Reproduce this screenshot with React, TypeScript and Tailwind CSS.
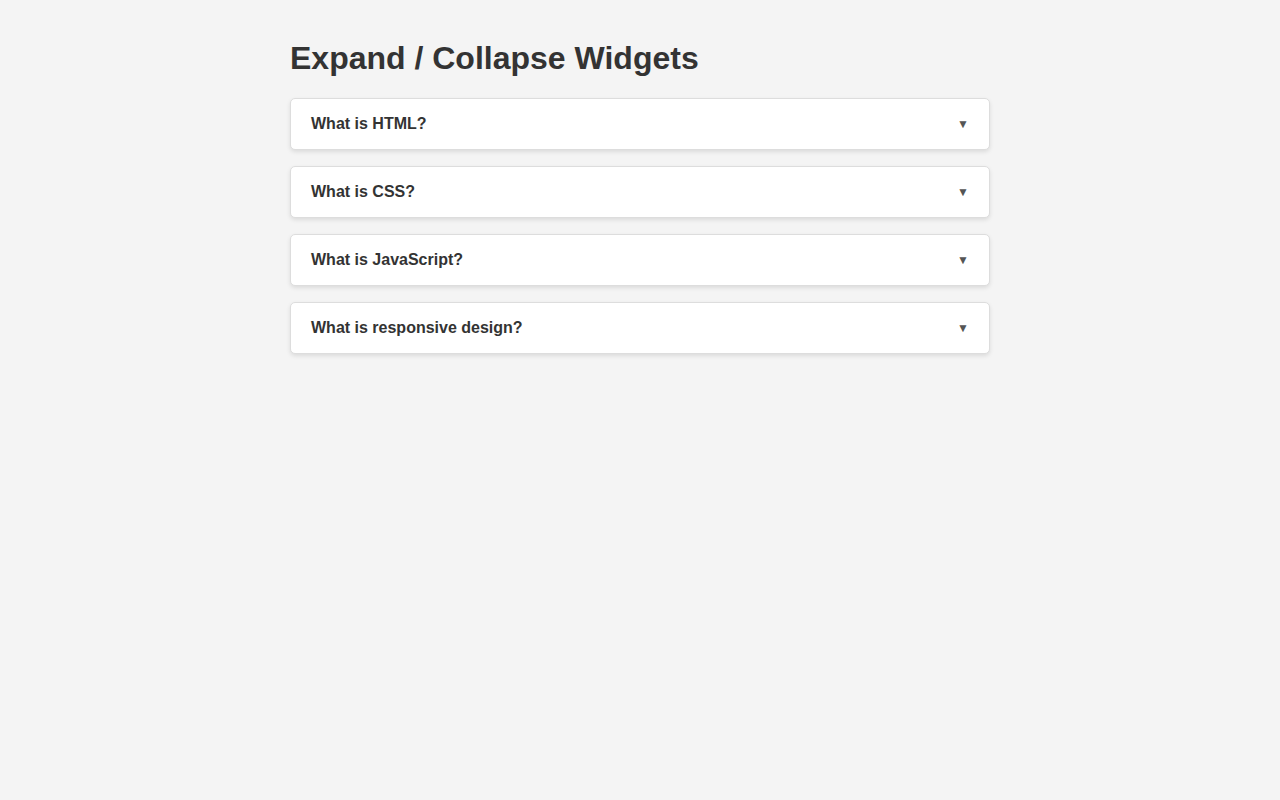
import { useState } from 'react';

const items = [
  {
    question: 'What is HTML?',
    answer: 'HTML (HyperText Markup Language) is the standard markup language used to structure content on the web.',
  },
  {
    question: 'What is CSS?',
    answer: 'CSS (Cascading Style Sheets) describes how HTML elements are displayed: colours, layout, fonts and more.',
  },
  {
    question: 'What is JavaScript?',
    answer: 'JavaScript is a programming language that makes web pages interactive.',
  },
  {
    question: 'What is responsive design?',
    answer: 'Responsive design makes a page adapt its layout to different screen sizes and devices.',
  },
];

function AccordionItem({ question, answer }: { question: string; answer: string }) {
  const [open, setOpen] = useState(false);

  return (
    <div className="bg-white border border-[#ddd] rounded-[5px] shadow-[0_2px_4px_rgba(0,0,0,0.1)] overflow-hidden">
      <button
        onClick={() => setOpen(!open)}
        className="w-full flex items-center justify-between px-5 py-[15px] text-left cursor-pointer"
      >
        <span className="text-base font-bold leading-5 text-[#333]">{question}</span>
        <span className={`text-xs leading-5 text-[#555] transition-transform ${open ? 'rotate-180' : ''}`}>▼</span>
      </button>
      {open && (
        <div className="px-5 pb-[15px] text-[15px] leading-6 text-[#555]">{answer}</div>
      )}
    </div>
  );
}

export default function App() {
  return (
    <div className="min-h-screen bg-[#f4f4f4] font-['Liberation_Sans',Arial,sans-serif]">
      <div className="w-[700px] mx-auto pt-10">
        {/* Page Header */}
        <h1 className="text-[32px] font-bold leading-[37px] text-[#333] mb-[21px]">Expand / Collapse Widgets</h1>

        <div className="flex flex-col gap-4">
          {items.map((item) => (
            <AccordionItem key={item.question} {...item} />
          ))}
        </div>
      </div>
    </div>
  );
}
